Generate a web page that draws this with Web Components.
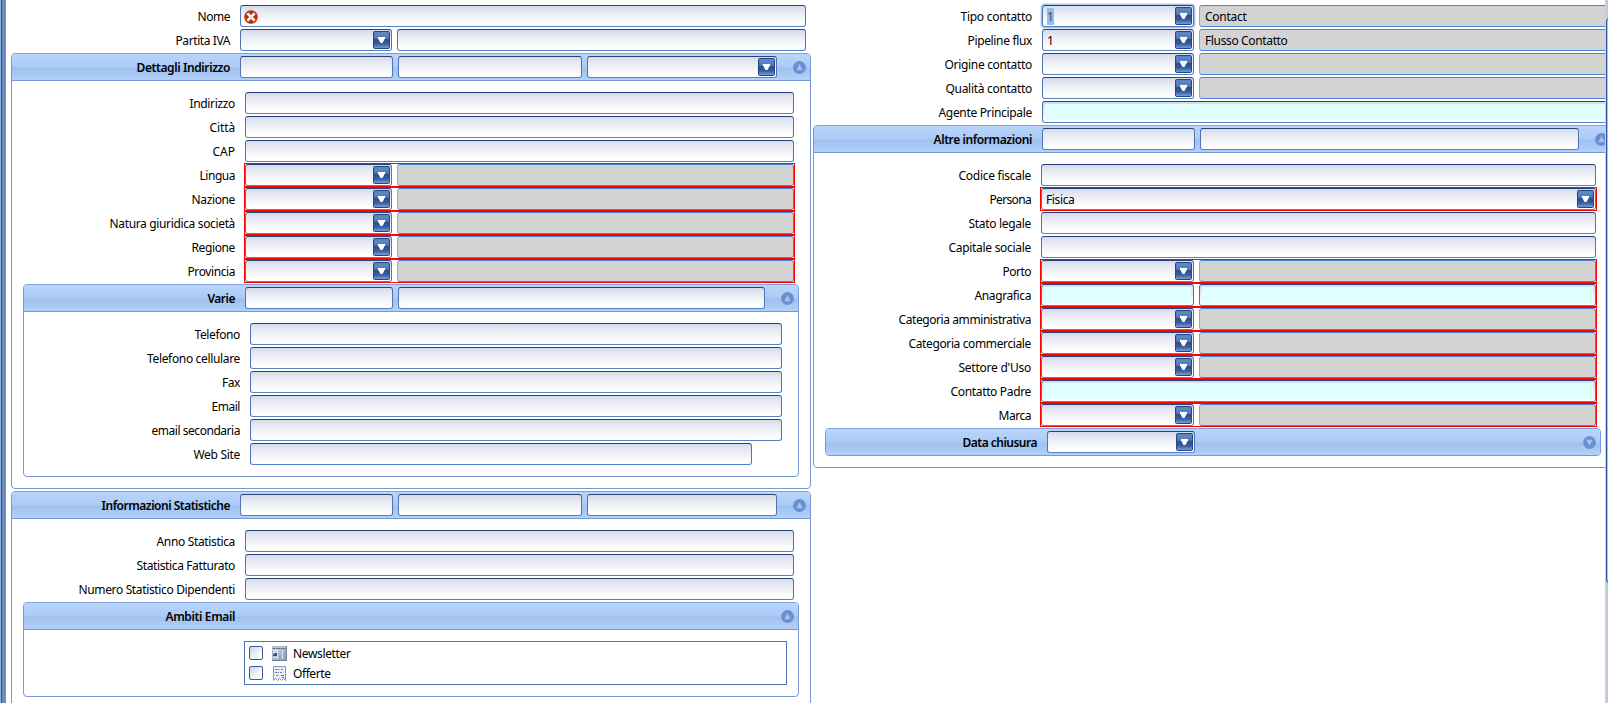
<!DOCTYPE html>
<html lang="it"><head><meta charset="utf-8"><title>Contatto</title>
<style>
html,body{margin:0;height:703px;overflow:hidden;background:#fff}
body{font:12px/22px "Noto Sans","Open Sans",sans-serif;color:#000}
</style></head><body>
<contact-page></contact-page>
<script>
const define=(name,html,setup)=>customElements.define(name,class extends HTMLElement{
  connectedCallback(){
    if(this.shadowRoot)return;
    const t=document.createElement('template');
    t.innerHTML=typeof html==='function'?html(this):html;
    this.attachShadow({mode:'open'}).append(t.content.cloneNode(true));
    if(setup)setup(this);
  }
});
const px=(el,n)=>el.getAttribute(n);

/* Text whose tracking is adjusted so that it takes a given width. */
define('fit-text',`<style>:host{display:inline-block;white-space:nowrap}span{display:inline-block}</style><span><slot></slot></span>`,el=>{
  const s=el.shadowRoot.querySelector('span'),w=+px(el,'w'),n=el.textContent.length;
  if(!w)return;
  const extra=(w+.5-s.getBoundingClientRect().width)/n;
  s.style.letterSpacing=extra.toFixed(3)+'px';
});

define('drop-button',`<style>
:host{display:block;width:17px;height:18px;flex:none}svg{display:block}</style>
<svg width="17" height="18" viewBox="0 0 17 18"><defs><linearGradient id="g" x2="0" y2="1"><stop offset="0" stop-color="#6088c4"/><stop offset=".42" stop-color="#4870b0"/><stop offset=".45" stop-color="#2c4f8c"/><stop offset=".72" stop-color="#365c9c"/><stop offset="1" stop-color="#7ba4df"/></linearGradient></defs>
<rect x=".5" y=".5" width="16" height="17" rx="1.2" fill="url(#g)" stroke="#254780"/>
<path d="M2 2h13v3q0 3-3 3H5Q2 8 2 5z" fill="#6b93cf" opacity=".3"/>
<path d="M5 6h7v1.2L9.5 12h-2L5 7.2z" fill="#fff"/></svg>`);

define('form-field',el=>`<style>
:host{display:flex;box-sizing:border-box;height:22px;min-width:0;border:1px solid;border-color:#28427a #4f74b2 #5582c4 #4f74b2;border-radius:3px;background:linear-gradient(#d5dae8,#e5e8f2 25%,#eff1f6 50%,#fff 92%);padding:1px 1px 1px 4px;flex:${px(el,'w')?`0 0 ${px(el,'w')}px`:'1 1 0'};line-height:20px}
:host([kind=grey]){background:#d3d3d3;border-color:#4a82d8 #4f7fca #4a82d8 #85abe4;padding-left:5px}
:host([kind=cyan]){background:linear-gradient(#e0ffff,#e0ffff) 2px 2px/calc(100% - 4px) calc(100% - 4px) no-repeat,linear-gradient(#d5dae8,#fff)}
:host([focus]){box-shadow:0 0 0 1px #a9c4eb,0 0 0 2px #dce8f9}
.t{flex:1;min-width:0;height:20px}
::slotted(.sel){background:#8fbfea;color:#244a80;line-height:16px}
</style><div class="t"><slot></slot></div>${el.hasAttribute('drop')?'<drop-button></drop-button>':''}`);

define('form-row',el=>`<style>
:host{display:flex;height:24px;margin-right:4px}
.l{flex:0 0 ${px(el,'l')-9}px;text-align:right;padding:2px 9px 0 0}
.b{flex:${px(el,'w')?`0 0 ${px(el,'w')-2}px`:'1 1 0'};min-width:0;display:flex;gap:5px;border:1px solid transparent}
:host([req]) .b{border-color:#f00}
</style><div class="l"><fit-text w="${px(el,'tw')}">${px(el,'label')}</fit-text></div><div class="b"><slot></slot></div>`);

define('toggle-icon',el=>`<style>:host{display:block;width:13px;height:13px}svg{display:block}</style>
<svg width="13" height="13" viewBox="0 0 13 13"><circle cx="6.5" cy="6.5" r="6.4" fill="#688fd0"/><path d="${el.hasAttribute('down')?'M3.7 4h5.6L6.5 9.5z':'M3.7 9h5.6L6.5 3.5z'}" fill="#a9c6f2" stroke="#9dbdec" stroke-width=".6"/></svg>`);

define('group-panel',el=>`<style>
:host{display:block;box-sizing:border-box;border:1px solid #7899d3;border-radius:4px;margin:1px 0}
:host([grow]){height:300px}
header{display:flex;position:relative;box-sizing:border-box;height:27px;padding:2px 4px 0 0;gap:5px;border-bottom:1px solid #7899d3;border-radius:3px 3px 0 0;background:linear-gradient(#bad5f9,#acccf8 49%,#9fc0ed 53%,#a3c5f2 65%,#b2d0fa);isolation:isolate}
header:before{content:"";position:absolute;z-index:-1;left:1px;right:1px;top:0;height:13px;border-radius:3px 3px 4px 4px;background:linear-gradient(#b9d5fa,#abcaf7);box-shadow:0 0 1px #c6dcfa}
:host([closed]) header{border-bottom:0;height:26px;border-radius:3px}
.l{flex:0 0 ${px(el,'l')-10}px;text-align:right;padding:1px 5px 0 0;height:22px;font-weight:600}
toggle-icon{margin:5px 0 0 auto;flex:none}
.body{padding:10px 11px}
:host([closed]) .body{display:none}
</style><header><div class="l"><fit-text w="${px(el,'tw')}">${px(el,'label')}</fit-text></div><slot name="head"></slot><toggle-icon ${el.hasAttribute('closed')?'down':''}></toggle-icon></header><div class="body"><slot></slot></div>`);

define('option-item',el=>`<style>
:host{display:flex;height:20px;align-items:center}
i{box-sizing:border-box;width:14px;height:14px;border:1px solid #3a5b96;border-radius:2px;background:linear-gradient(135deg,#cfd6e6,#fff 80%);margin:0 9px 0 4px}
svg{display:block;margin-right:6px}
::slotted(*){margin-top:2px}
</style><i></i>${px(el,'icon')==='news'?
`<svg width="15" height="15" viewBox="0 0 15 15"><defs><linearGradient id="n" x2="1" y2="1"><stop stop-color="#d5dde7"/><stop offset="1" stop-color="#8595af"/></linearGradient></defs><rect width="15" height="15" fill="url(#n)"/><path d="M0 .5h15M.5 0v15" stroke="#a9b5c6"/><path d="M1 2.5h13" stroke="#566477" stroke-dasharray="2 .6"/><path d="M1 4.5h4M1 6.5h4M1 11.5h4" stroke="#e3eaf2"/><path d="M1 7h4v3H1z" fill="#304d70"/><path d="M1 7h2v1.5H1z" fill="#5ba8d8"/><path d="M5.5 4v9M10.5 4v9" stroke="#edf1f5" stroke-width=".8"/><path d="M14.5 0v15M0 14.5h15" stroke="#71819c"/></svg>`:
`<svg width="15" height="15" viewBox="0 0 15 15"><path d="M1.5.5h12v14l-2-2-2 2-2-2-2 2-2-2-2 2z" fill="#e9eef6" stroke="#8797b3"/><path d="M3 3.5h5M3 6.5h4M4 9.5h3M9 3.5h2M8 6.5h2" stroke="#6883ad" stroke-dasharray="2 .6"/><path d="M9 9.5h3M10 11.5h2" stroke="#5978a8"/></svg>`}<slot></slot>`);

define('option-list',`<style>
:host{display:block;box-sizing:border-box;height:44px;margin:1px 0 1px 209px;border:1px solid #4a72b0;padding:1px 0;background:#fff}
</style><slot></slot>`);

define('error-mark',`<style>:host{display:block;margin:3px 0 0 -1px}svg{display:block}</style>
<svg width="14" height="14" viewBox="0 0 14 14"><circle cx="7" cy="7" r="6.9" fill="#d06a52"/><circle cx="7" cy="7" r="6.3" fill="#bd2c0c"/><path d="M3.4 3.4l7.2 7.2M10.6 3.4l-7.2 7.2" stroke="#fff" stroke-width="2.7"/><path d="M7 5.6L8.4 7 7 8.4 5.6 7z" fill="#eed6ce"/></svg>`);

const F=(w,a='')=>`<form-field ${w?`w="${w}"`:''} ${a}></form-field>`;
const row=(label,tw,l,fields,a='')=>`<form-row label="${label}" tw="${tw}" l="${l}" ${a}>${fields}</form-row>`;
const H=(w,a='')=>F(w,'slot="head" '+a);
const L=F(147,'drop')+F(0,'kind="grey"'), R=F(153,'drop')+F(0,'kind="grey"');

define('contact-page',`<style>
:host{display:flex;width:1608px;height:703px;overflow:hidden;background:#fff}
.edge{flex:0 0 6px;background:linear-gradient(90deg,#91b2e3 1px,#315792 1px 2px,#6b8cbe 2px)}
.view{flex:1;min-width:0;display:flex;gap:2px;padding:4px 0 0 5px;overflow:hidden}
.col{flex:0 0 800px;display:flex;flex-direction:column}
.col>*{flex:none}
.scroll{flex:0 0 3px;box-sizing:border-box;padding:18px 0 0 1px;background:linear-gradient(90deg,#cbd6e4,#b9c8dc);overflow:hidden}
.thumb{box-sizing:border-box;width:8px;height:565px;border:1px solid #2c539a;border-radius:3px;background:#a8c5ee}
</style>
<div class="edge"></div><div class="view"><div class="col">
${row('Nome',32,228,'<form-field><error-mark></error-mark></form-field>')}
${row('Partita IVA',54,228,F(152,'drop')+F())}
<group-panel label="Dettagli Indirizzo" tw="93" l="228">${H(153)+H(184)+H(190,'drop')}
${row('Indirizzo',45,221,F())}${row('Città',25,221,F())}${row('CAP',22,221,F())}
${[['Lingua',35],['Nazione',43],['Natura giuridica società',125],['Regione',43],['Provincia',47]].map(r=>row(r[0],r[1],221,L,'req')).join('')}
<group-panel label="Varie" tw="27" l="221">${H(148)+H(367)}
${[['Telefono',45],['Telefono cellulare',92.5],['Fax',17.5],['Email',28],['email secondaria',88]].map(r=>row(r[0],r[1],214,F())).join('')}
${row('Web Site',46,214,F(),'w="504"')}
</group-panel></group-panel>
<group-panel grow label="Informazioni Statistiche" tw="128" l="228">${H(153)+H(184)+H(190)}
${row('Anno Statistica',78,221,F())}${row('Statistica Fatturato',98,221,F())}${row('Numero Statistico Dipendenti',156,221,F())}
<group-panel label="Ambiti Email" tw="69" l="221">
<option-list><option-item icon="news"><fit-text w="57">Newsletter</fit-text></option-item><option-item icon="offer"><fit-text w="37">Offerte</fit-text></option-item></option-list>
</group-panel></group-panel>
</div><div class="col">
${row('Tipo contatto',71,228,'<form-field w="152" drop focus><span class="sel">1</span></form-field><form-field kind="grey"><fit-text w="41">Contact</fit-text></form-field>')}
${row('Pipeline flux',64,228,'<form-field w="152" drop>1</form-field><form-field kind="grey"><fit-text w="82">Flusso Contatto</fit-text></form-field>')}
${row('Origine contatto',87,228,F(152,'drop')+F(0,'kind="grey"'))}
${row('Qualità contatto',86,228,F(152,'drop')+F(0,'kind="grey"'))}
${row('Agente Principale',93,228,F(0,'kind="cyan"'))}
<group-panel label="Altre informazioni" tw="98" l="228">${H(153)+H(379)}
${row('Codice fiscale',72,215,F())}
${row('Persona',41,215,'<form-field drop><fit-text w="28">Fisica</fit-text></form-field>','req')}
${row('Stato legale',62,215,F())}${row('Capitale sociale',82,215,F())}
${row('Porto',28,215,R,'req')}
${row('Anagrafica',56,215,F(153,'kind="cyan"')+F(0,'kind="cyan"'),'req')}
${row('Categoria amministrativa',132,215,R,'req')}
${row('Categoria commerciale',122,215,R,'req')}
${row("Settore d'Uso",72,215,R,'req')}
${row('Contatto Padre',80,215,F(0,'kind="cyan"'),'req')}
${row('Marca',32,215,R,'req')}
<group-panel closed label="Data chiusura" tw="74" l="221">${H(148,'drop')}</group-panel>
</group-panel>
</div></div><div class="scroll"><div class="thumb"></div></div>`);
</script>
</body></html>
